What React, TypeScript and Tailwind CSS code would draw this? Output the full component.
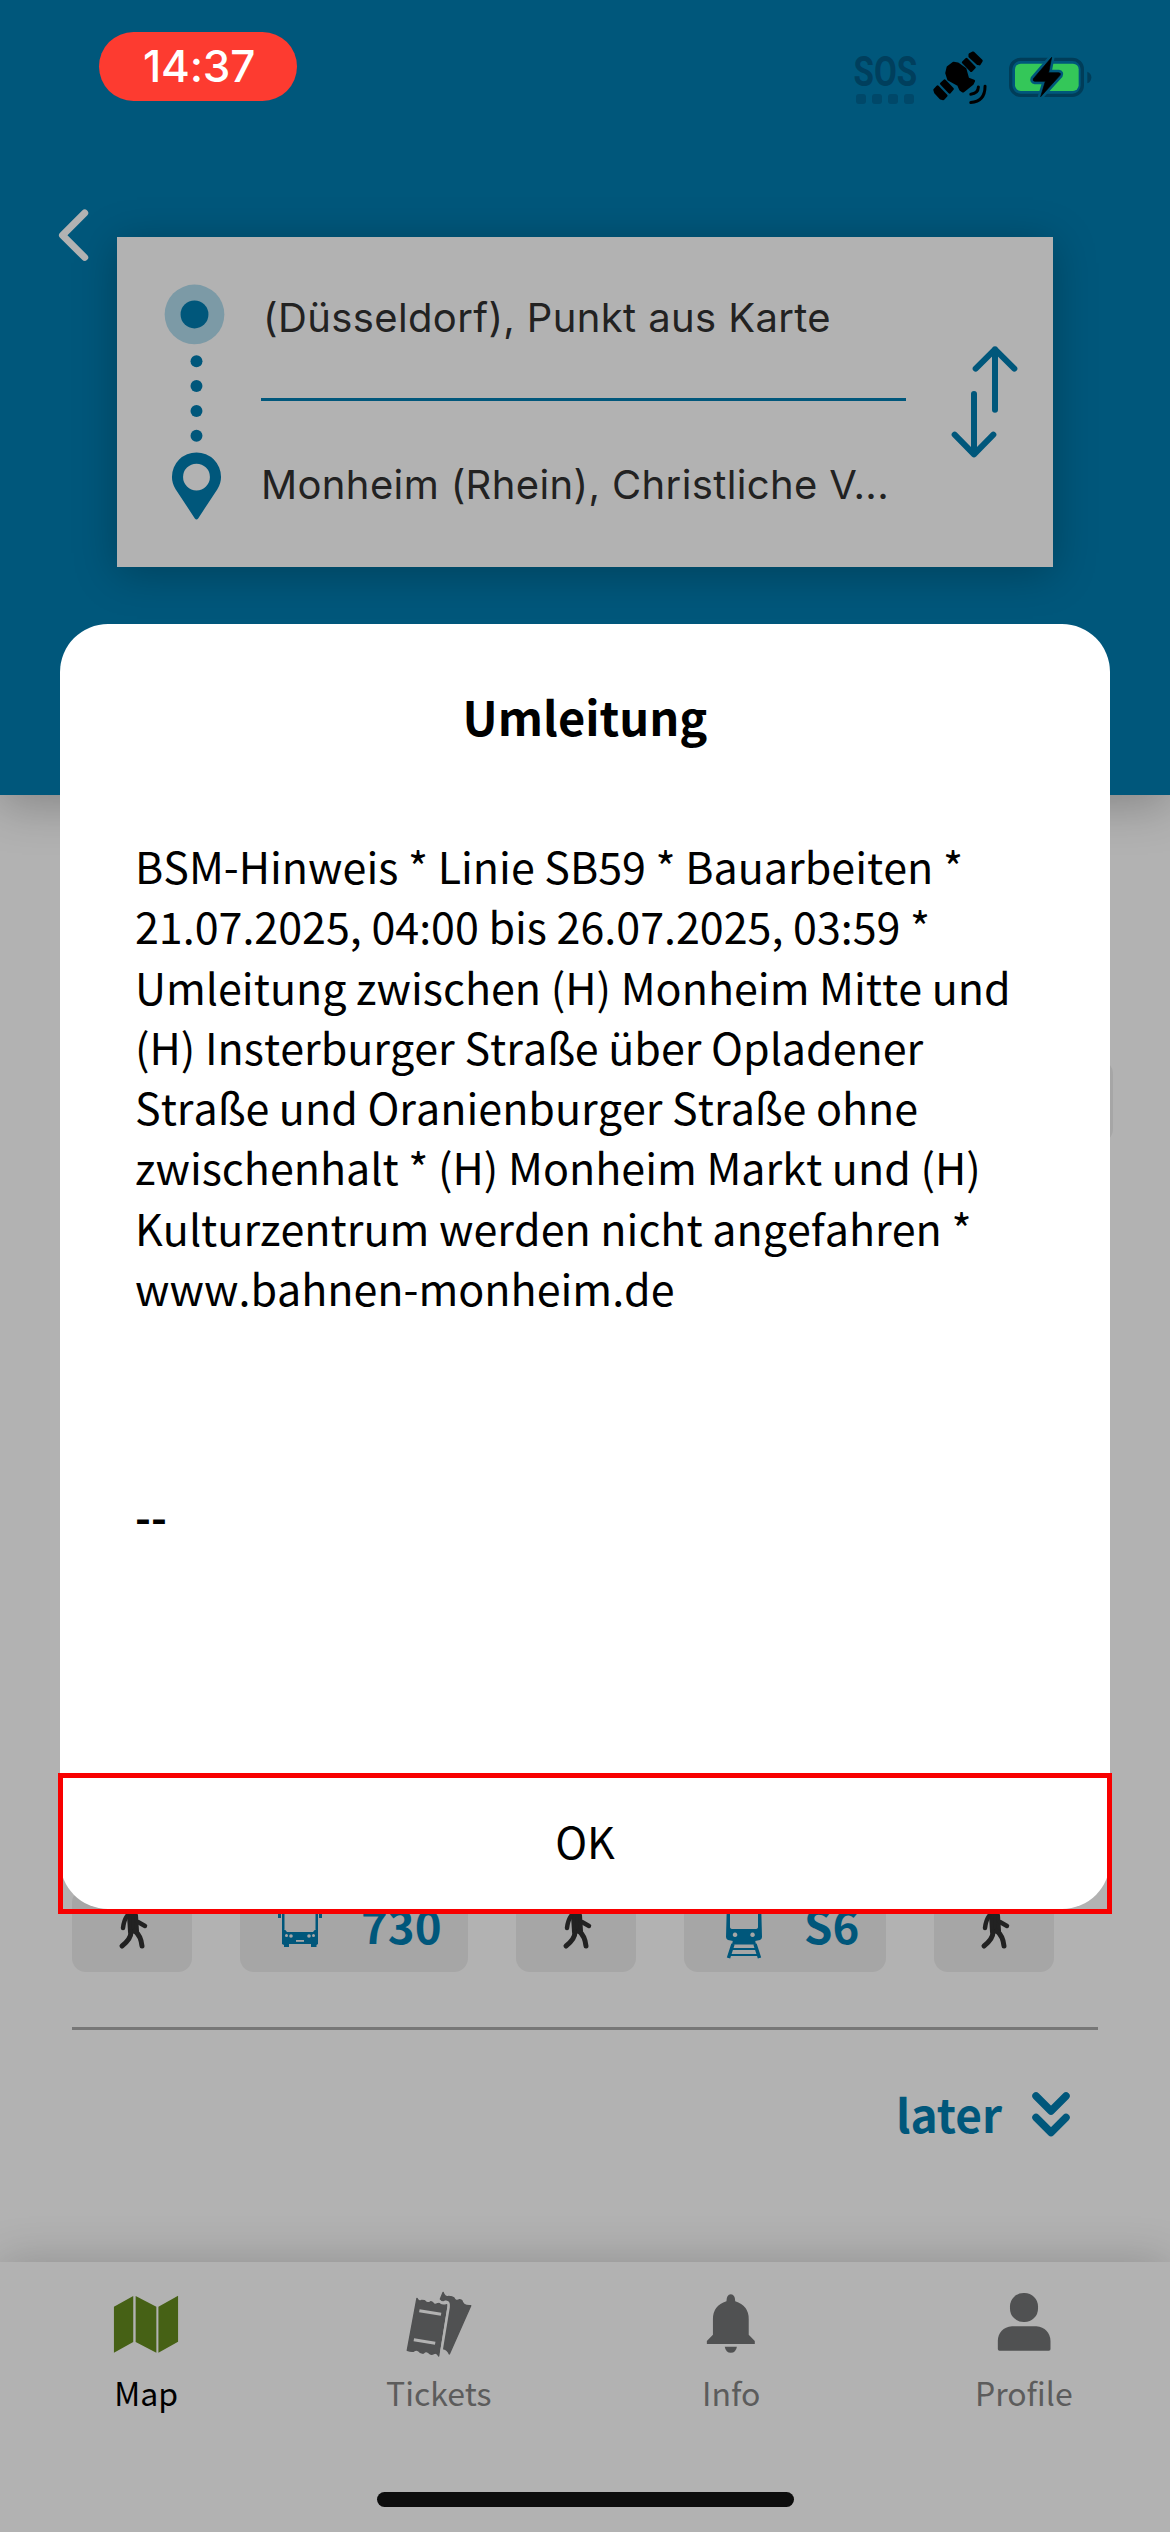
import type { ReactNode } from "react";

const SANS = "font-['Noto_Sans_CJK_SC','Noto_Sans',sans-serif]";
const BLUE = "#00577b";
const CHIP_BG = "#a6a6a6";

function StatusBar() {
  return (
    <div className="flex h-[102px] items-start pt-8 pl-[99px]">
      <div className="flex h-[69px] w-[198px] items-center justify-center rounded-[35px] bg-[#fd3b30] pb-px pl-[2px] font-['Inter',sans-serif] text-[44px] leading-none font-medium tracking-[-0.2px] text-white">
        14:37
      </div>
      <div className="mt-[20px] ml-[557px] flex w-[62px] flex-col items-center text-[#003f5d]">
        <span className="origin-center scale-x-[0.79] font-['Roboto',sans-serif] text-[42px] leading-[40px] font-bold">SOS</span>
        <div className="mt-[2px] flex gap-[6px]">
          {[0, 1, 2, 3].map((i) => (
            <span key={i} className="h-[10px] w-[10px] rounded-[3px] bg-[#004869]" />
          ))}
        </div>
      </div>
      <svg className="mt-[15px] ml-[14px] h-[60px] w-[63px]" viewBox="330 80 190 180" fill="#000" stroke="#000" strokeLinejoin="round">
        <g strokeWidth="8">
          <path d="M380 158 L384 141 L401 128 L414 130 L436 146 L444 175 L462 182 L458 190 L430 213 L422 208 L416 194 L386 177Z" />
          <path d="M450 102 L460 97 L485 121 L479 131 L474 130 L450 108Z" />
          <path d="M430 126 L440 116 L464 141 L454 151Z" />
          <path d="M364 190 L374 181 L398 206 L389 216Z" />
          <path d="M344 209 L353 199 L379 226 L370 236 L362 234 L346 216Z" />
        </g>
        <g fill="none" strokeWidth="9" strokeLinecap="round">
          <path d="M476 200 Q475 220 453 222" />
          <path d="M496 198 Q496 244 453 247" />
        </g>
      </svg>
      <svg className="mt-[20px] ml-[14px] h-[50px] w-[88px]" viewBox="561 96 264 150">
        <rect x="572" y="118" width="215" height="108" rx="30" fill="none" stroke="#003d59" strokeWidth="10" />
        <path d="M802 155 Q814 160 814 172 Q814 186 802 190Z" fill="#003d59" />
        <rect x="585" y="131" width="191" height="82" rx="17" fill="#34c759" />
        <path d="M695 112 L640 176 Q637 183 645 184 L676 184 L662 230 L720 166 Q724 159 716 158 L686 158Z" fill="#000" stroke={BLUE} strokeWidth="17" strokeLinejoin="round" />
        <path d="M695 112 L640 176 Q637 183 645 184 L676 184 L662 230 L720 166 Q724 159 716 158 L686 158Z" fill="#000" stroke="#000" strokeWidth="2" strokeLinejoin="round" />
      </svg>
    </div>
  );
}

function SearchCard() {
  return (
    <div className="ml-[117px] flex h-[330px] w-[936px] bg-[#b2b2b2] font-['Inter',sans-serif] text-[40px] tracking-[0.37px] text-[#222] shadow-[0_6px_40px_rgba(0,0,0,0.25)]">
      <svg className="mt-[45px] ml-[46px] h-[240px] w-[63px] shrink-0" viewBox="190 185 190 720" fill={BLUE}>
        <circle cx="285" cy="281" r="90" fill="#7c9aa6" />
        <circle cx="285" cy="281" r="42" />
        {[422, 497, 572, 647].map((y) => (
          <circle key={y} cx="291" cy={y} r="18" />
        ))}
        <path fillRule="evenodd" d="M291 697 A74 74 0 0 0 217 771 Q217 790 228 808 L286 896 Q291 903 296 896 L354 808 Q365 790 365 771 A74 74 0 0 0 291 697Z M291 731 A40 40 0 1 1 291 812 A40 40 0 1 1 291 731Z" />
      </svg>
      <div className="ml-[35px] w-[645px] shrink-0 pt-[51px]">
        <p className="h-[60px] pl-[2px] leading-[60px] whitespace-nowrap">(Düsseldorf), Punkt aus Karte</p>
        <div className="mt-[50px] h-[3px] bg-[#00577b]" />
        <p className="mt-[54px] h-[60px] leading-[60px] whitespace-nowrap">Monheim (Rhein), Christliche V...</p>
      </div>
      <svg className="mt-[105px] ml-[43px] h-[120px] w-[73px]" viewBox="1107 365 219 360" fill="none" stroke={BLUE} strokeWidth="18" strokeLinecap="round" strokeLinejoin="round">
        <path d="M1245 568 V387 M1187 445 L1245 387 L1303 445" />
        <path d="M1182 521 V702 M1124 643 L1182 702 L1240 643" />
      </svg>
    </div>
  );
}

function Header() {
  return (
    <header className="relative h-[795px] bg-[#00577b] shadow-[0_10px_44px_rgba(0,0,0,0.25)]">
      <StatusBar />
      <svg className="mt-[105px] ml-[55px] h-[56px] w-[36px]" viewBox="0 0 36 56" fill="none" stroke="#b2b2b2" strokeWidth="7" strokeLinecap="round" strokeLinejoin="round">
        <path d="M29.7 6 L7.5 28.2 L29.7 50.4" />
      </svg>
      <div className="-mt-[26px]">
        <SearchCard />
      </div>
    </header>
  );
}

function Walker() {
  return (
    <svg className="h-[84px] w-[120px]" viewBox="72 1889 120 84" fill="none" stroke="#222" strokeLinecap="round" strokeLinejoin="round">
      <circle cx="134" cy="1905" r="4" fill="#222" stroke="none" />
      <path d="M129 1915 H136 L137 1931 L130 1932Z" fill="#222" strokeWidth="4" />
      <path d="M127 1916 Q124 1920 123 1928" strokeWidth="4.5" />
      <path d="M138 1922 L145 1926" strokeWidth="4.5" />
      <path d="M131 1932 Q131 1939 122 1946" strokeWidth="5" />
      <path d="M135 1931 Q141 1936 142 1946" strokeWidth="5" />
    </svg>
  );
}

function Bus() {
  return (
    <svg className="h-[84px] w-[50px]" viewBox="275 1889 50 84" fill={BLUE}>
      <path fillRule="evenodd" d="M282 1900 H318 V1944 L316.5 1945 V1947 H311 V1944 H289 V1947 H284 V1945 L282 1944Z M284.5 1904 V1930 H315.5 V1904Z" />
      <rect x="278" y="1906" width="3" height="12" />
      <rect x="319" y="1906" width="3" height="12" />
      <g fill={CHIP_BG}>
        <path d="M284.5 1929 H315.5 L313 1932 H287Z" />
        <circle cx="286.5" cy="1935.5" r="1.5" />
        <circle cx="291" cy="1936" r="1.8" />
        <circle cx="313.5" cy="1935.5" r="1.5" />
        <circle cx="309" cy="1936" r="1.8" />
        <rect x="296" y="1940" width="8" height="1.8" />
      </g>
    </svg>
  );
}

function Train() {
  return (
    <svg className="h-[84px] w-[50px]" viewBox="720 1889 50 84" fill={BLUE}>
      <path fillRule="evenodd" d="M727 1900 H761 L762 1937 Q762 1939 760 1940 L755 1941 H733 L728 1940 Q726 1939 726 1937Z M730 1905 V1927 Q730 1929 733 1929 H755 Q758 1929 758 1927 V1905Z M735 1932.5 a2.3 2.3 0 1 0 .1 0Z M752.5 1932.5 a2.3 2.3 0 1 0 .1 0Z" />
      <path d="M733 1940 H755 L756 1944.5 H732Z" />
      <path d="M732 1949 H756 M730 1955 H758" stroke={BLUE} strokeWidth="2" fill="none" />
      <path d="M733 1944 L728.5 1958 M755 1944 L759.5 1958" stroke={BLUE} strokeWidth="3.5" fill="none" />
    </svg>
  );
}

function Chip({ width, children }: { width: string; children: ReactNode }) {
  return <div className={`flex h-[83px] items-start rounded-[14px] bg-[#a6a6a6] ${width}`}>{children}</div>;
}

function Results() {
  return (
    <main className="flex h-[1467px] flex-col bg-[#b2b2b2] pt-[265px]">
      <div className="mr-[57px] h-[83px] w-[120px] self-end rounded-[14px] bg-[#a6a6a6]" />
      <div className="mt-[746px] ml-[72px] flex gap-12">
        <Chip width="w-[120px]"><Walker /></Chip>
        <Chip width="w-[228px]">
          <div className="ml-[35px]"><Bus /></div>
          <span className={`ml-[36px] text-[45.5px] leading-[71px] font-bold text-[#00577b] ${SANS}`}>730</span>
        </Chip>
        <Chip width="w-[120px]"><Walker /></Chip>
        <Chip width="w-[202px]">
          <div className="ml-[36px]"><Train /></div>
          <span className={`ml-[34px] text-[45.5px] leading-[71px] font-bold text-[#00577b] ${SANS}`}>S6</span>
        </Chip>
        <Chip width="w-[120px]"><Walker /></Chip>
      </div>
      <div className="mt-[55px] ml-[72px] h-[3px] w-[1026px] bg-[#777]" />
      <div className="mt-[51px] flex h-[64px] items-center justify-end pr-[96px]">
        <span className={`text-[46px] leading-[64px] font-bold text-[#00577b] ${SANS}`}>later</span>
        <svg className="mt-[2px] ml-[26px] h-[50px] w-[46px]" viewBox="0 0 46 50" fill="none" stroke={BLUE} strokeWidth="7.5" strokeLinecap="round" strokeLinejoin="round">
          <path d="M8 7 L23 22 L38 7 M8 28.5 L23 43.5 L38 28.5" />
        </svg>
      </div>
    </main>
  );
}

function MapIcon() {
  return (
    <svg className="h-[80px] w-[80px]" viewBox="134 731 232 240" preserveAspectRatio="none" fill="#466115">
      <path d="M157 799 L213 767 V905 L157 937Z M220 767 L280 799 V937 L220 905Z M286 799 L343 766 V904 L286 937Z" />
    </svg>
  );
}

function TicketsIcon() {
  return (
    <svg className="h-[80px] w-[80px]" viewBox="984 731 232 240" preserveAspectRatio="none" fill="#505152" stroke="#505152" strokeWidth="4" strokeLinejoin="round">
      <path d="M1112 756 Q1117 772 1128 768 Q1139 769 1143 772 Q1148 785 1160 778 L1166 780 Q1170 798 1192 796 L1130 941 Q1124 926 1111 925 L1131 786 Q1126 778 1117 780 Q1110 784 1104 776Z" />
      <path d="M1036 774 Q1042 786 1050 780 L1058 781 Q1066 792 1076 784 L1081 786 Q1086 796 1096 790 L1101 789 Q1108 798 1123 793 L1099 947 Q1093 934 1083 941 Q1076 944 1070 937 Q1062 930 1055 938 Q1046 940 1041 932 Q1034 926 1026 933 Q1018 934 1008 930Z" />
      <g stroke="#b2b2b2" strokeWidth="7" fill="none">
        <path d="M1043 811 L1106 822 M1027 898 L1089 909" strokeWidth="9" />
        <path d="M1102 783 Q1110 790 1118 784 Q1130 782 1128 800 L1106 940" />
      </g>
    </svg>
  );
}

function BellIcon() {
  return (
    <svg className="h-[80px] w-[80px]" viewBox="151 731 237 240" preserveAspectRatio="none" fill="#505152">
      <path d="M269 762 Q282 763 282 783 Q322 796 322 836 V883 L340 902 V911 H198 V902 L216 883 V836 Q216 796 256 783 Q256 763 269 762Z" />
      <path d="M251 919 H287 Q284 937 269 937 Q254 937 251 919Z" />
    </svg>
  );
}

function ProfileIcon() {
  return (
    <svg className="h-[80px] w-[80px]" viewBox="1017 731 237 240" preserveAspectRatio="none" fill="#505152">
      <rect x="1094" y="758" width="83" height="87" rx="40" />
      <path d="M1058 926 V901 Q1060 863 1100 858 H1172 Q1211 863 1214 901 V926 Q1214 931 1209 931 H1063 Q1058 931 1058 926Z" />
    </svg>
  );
}

function Tab({ icon, label, color }: { icon: ReactNode; label: string; color: string }) {
  return (
    <div className={`flex flex-1 flex-col items-center pt-[22px] ${color}`}>
      {icon}
      <span className={`mt-[4px] text-[32px] leading-[48px] ${SANS}`}>{label}</span>
    </div>
  );
}

function TabBar() {
  return (
    <nav className="relative flex h-[270px] flex-col bg-[#b2b2b2] shadow-[0_0_44px_rgba(0,0,0,0.2)]">
      <div className="flex h-[230px]">
        <Tab icon={<MapIcon />} label="Map" color="text-black" />
        <Tab icon={<TicketsIcon />} label="Tickets" color="text-[#5c5c5c]" />
        <Tab icon={<BellIcon />} label="Info" color="text-[#5c5c5c]" />
        <Tab icon={<ProfileIcon />} label="Profile" color="text-[#5c5c5c]" />
      </div>
      <div className="h-[15px] w-[417px] self-center rounded-full bg-[#0d0d0d]" />
    </nav>
  );
}

const MESSAGE = [
  "BSM-Hinweis * Linie SB59 * Bauarbeiten *",
  "21.07.2025, 04:00 bis 26.07.2025, 03:59 *",
  "Umleitung zwischen (H) Monheim Mitte und",
  "(H) Insterburger Straße über Opladener",
  "Straße und Oranienburger Straße ohne",
  "zwischenhalt * (H) Monheim Markt und (H)",
  "Kulturzentrum werden nicht angefahren *",
  "www.bahnen-monheim.de",
];

function Dialog() {
  return (
    <div className="absolute inset-x-[60px] top-[624px]">
      <section className={`flex h-[1285px] flex-col rounded-[48px] bg-white text-black ${SANS}`}>
        <h1 className="mt-[57px] text-center text-[47px] leading-[70px] font-bold">Umleitung</h1>
        <div className="mt-[84px] ml-[75px] text-[43px] leading-[60.25px] whitespace-nowrap [font-kerning:none]">
          {MESSAGE.map((line) => (
            <p key={line}>{line}</p>
          ))}
        </div>
        <p className="mt-[168px] ml-[75px] text-[43px] leading-[60px] font-bold">--</p>
      </section>
      <button className={`absolute -inset-x-[2px] top-[1149px] h-[141px] border-5 border-[#f80000] pb-[6px] text-[43px] leading-[125px] text-black ${SANS}`}>
        OK
      </button>
    </div>
  );
}

export default function App() {
  return (
    <div className="relative h-[2532px] w-[1170px] overflow-hidden bg-[#b2b2b2]">
      <div className="flex flex-col">
        <div className="relative z-10"><Header /></div>
        <Results />
        <TabBar />
      </div>
      <div className="absolute inset-0 z-20">
        <Dialog />
      </div>
    </div>
  );
}
